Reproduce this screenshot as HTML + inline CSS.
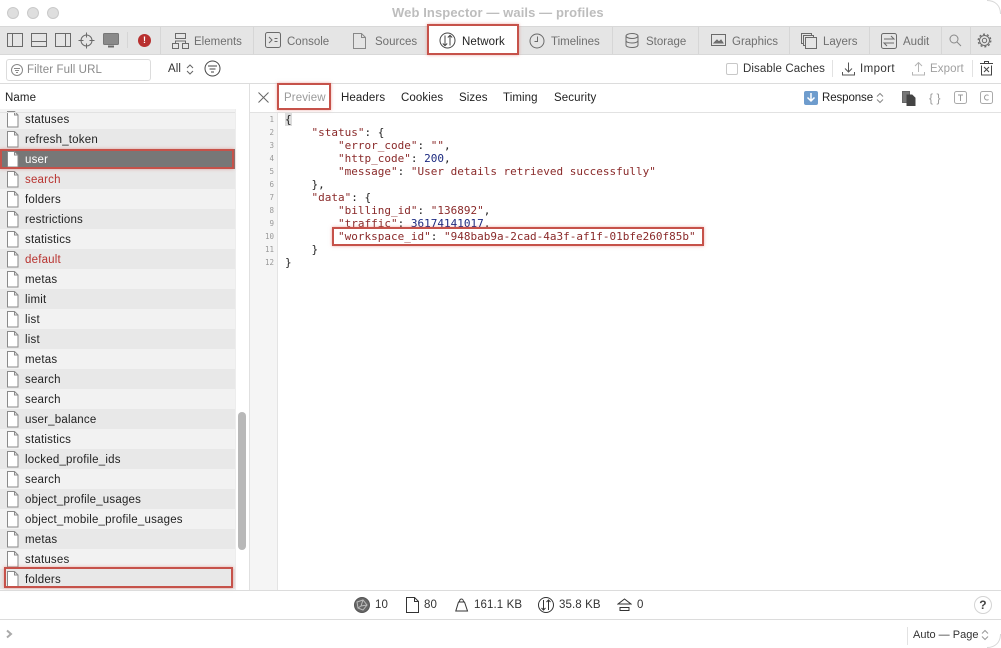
<!DOCTYPE html>
<html><head><meta charset="utf-8"><style>
html,body{margin:0;padding:0;background:#fff}
#r{position:relative;width:1001px;height:648px;overflow:hidden;background:#fff;font-family:"Liberation Sans",sans-serif;font-size:11.5px;letter-spacing:.1px;color:#222}
#r div,#r svg{position:absolute}
.t{white-space:nowrap;line-height:14px;margin-top:1px}
.g{color:#6f6f6f;letter-spacing:0}
.row{left:0;width:235px;height:20px;background:#f2f2f2}
.d{background:#e8e8e8}
.row .t{left:25px;top:3px;color:#222;letter-spacing:.2px}
.row svg{left:7px;top:0}
.c{font-family:"DejaVu Sans Mono",monospace;font-size:11px;letter-spacing:0;line-height:13px;white-space:pre;color:#222}
.k{color:#8a2a2a}.n{color:#1c2a80}
.rb{border:2px solid #c6524a;box-shadow:0 0 3px rgba(220,90,80,.5);box-sizing:border-box}
svg{fill:none;stroke:#6a6a6a;stroke-width:1}
.ln{font-family:"DejaVu Sans Mono",monospace;font-size:7.5px;letter-spacing:0;color:#999;text-align:right;width:17px;left:257px;line-height:13px}
.sep{width:1px;background:#d6d6d6}
.dot{top:7px;width:12px;height:12px;border-radius:50%;background:#dedede;border:.5px solid #cacaca;box-sizing:border-box}
</style></head><body><div id="r">
<svg width="0" height="0" style="left:0;top:0"><symbol id="f" viewBox="0 0 12 20"><path d="M.5 2.500h7l3.500 3.500v12h-10.500z" stroke="#8a8a8a" fill="#fff"/><path d="M7.500 2.500v3.500h3.500" stroke="#8a8a8a"/></symbol></svg>
<!-- title -->
<div class="dot" style="left:7px"></div>
<div class="dot" style="left:27px"></div>
<div class="dot" style="left:47px"></div>
<div class="t" style="left:392px;top:5px;font-size:13px;font-weight:bold;color:#bdbdbd">Web Inspector — wails — profiles</div>
<!-- tabbar -->
<div style="left:0;top:26px;width:1001px;height:29px;background:#e5e5e5;border-top:1px solid #d8d8d8;border-bottom:1px solid #d8d8d8;box-sizing:border-box"></div>
<div class="sep" style="left:160px;top:27px;height:27px"></div>
<div class="sep" style="left:253px;top:27px;height:27px"></div>
<div class="sep" style="left:612px;top:27px;height:27px"></div>
<div class="sep" style="left:698px;top:27px;height:27px"></div>
<div class="sep" style="left:789px;top:27px;height:27px"></div>
<div class="sep" style="left:869px;top:27px;height:27px"></div>
<div class="sep" style="left:941px;top:27px;height:27px"></div>
<div class="sep" style="left:970px;top:27px;height:27px"></div>
<svg style="left:0;top:26px" width="130" height="28"><rect x="7.500" y="7.500" width="15" height="13"/><path d="M12.500 7.500v13"/><rect x="31.500" y="7.500" width="15" height="13"/><path d="M31.500 15.500h15"/><rect x="55.500" y="7.500" width="15" height="13"/><path d="M65.500 7.500v13"/><circle cx="86.500" cy="14.500" r="5.500"/><path d="M86.500 6.500v5M86.500 17.500v5M78.500 14.500h5M89.500 14.500h5"/><rect x="103.500" y="7.500" width="15" height="11" rx="1" fill="#8a8a8a" stroke="#777"/><path d="M108 20.500h6" stroke-width="2"/></svg>
<div class="sep" style="left:127px;top:32px;height:16px"></div>
<div style="left:138px;top:34px;width:13px;height:13px;border-radius:50%;background:#b8302f;color:#fff;font-size:9px;font-weight:bold;line-height:13px;text-align:center">!</div>
<svg style="left:172px;top:33px" width="17" height="16"><rect x="3.500" y=".5" width="10" height="5"/><rect x=".5" y="10.500" width="6" height="5"/><rect x="10.500" y="10.500" width="6" height="5"/><path d="M3.500 10.500v-2.500h10v2.500"/></svg>
<div class="t g" style="left:194px;top:34px">Elements</div>
<svg style="left:265px;top:32px" width="17" height="17"><rect x=".5" y=".5" width="15" height="15" rx="2"/><path d="M4 5l3 3-3 3M9.500 6.500h3M9.500 9.500h3"/></svg>
<div class="t g" style="left:287px;top:34px">Console</div>
<svg style="left:353px;top:33px" width="13" height="16"><path d="M.5.500h8l4 4v11h-12zM8.500.500v4h4" stroke="#888"/></svg>
<div class="t g" style="left:375px;top:34px">Sources</div>
<div style="left:427px;top:24px;width:92px;height:31px;background:#fff"></div>
<svg style="left:439px;top:32px" width="18" height="18"><circle cx="8.500" cy="8.500" r="7.500" stroke="#444"/><path d="M6 3.500v10M3.800 11.500l2.200 2.200 2.200-2.200M11 13.500v-10M8.800 5.500l2.200-2.200 2.200 2.200" stroke="#444"/></svg>
<div class="t" style="left:462px;top:34px;color:#222">Network</div>
<div class="rb" style="left:427px;top:24px;width:92px;height:31px"></div>
<svg style="left:529px;top:33px" width="16" height="16"><circle cx="8" cy="8" r="7"/><path d="M8.500 3.500v5h-3"/></svg>
<div class="t g" style="left:551px;top:34px">Timelines</div>
<svg style="left:625px;top:33px" width="15" height="16"><ellipse cx="7" cy="3" rx="6" ry="2.500"/><path d="M1 3v9c0 1.500 2.500 2.500 6 2.500s6-1 6-2.500V3M1 7.500c0 1.500 2.500 2.500 6 2.500s6-1 6-2.500"/></svg>
<div class="t g" style="left:646px;top:34px">Storage</div>
<svg style="left:711px;top:34px" width="15" height="13"><rect x=".5" y=".5" width="14" height="11"/><path d="M3 9l3-3 2 2 2-2 2 3z" fill="#777"/></svg>
<div class="t g" style="left:732px;top:34px">Graphics</div>
<svg style="left:801px;top:33px" width="16" height="16"><rect x=".5" y=".5" width="10" height="10"/><rect x="2.500" y="2.500" width="10" height="10" fill="#e5e5e5"/><rect x="4.500" y="4.500" width="11" height="11" fill="#e5e5e5"/></svg>
<div class="t g" style="left:823px;top:34px">Layers</div>
<svg style="left:881px;top:33px" width="16" height="16"><rect x=".5" y=".5" width="15" height="15" rx="2"/><path d="M3 6h10l-3-3M13 10H3l3 3"/></svg>
<div class="t g" style="left:903px;top:34px">Audit</div>
<svg style="left:949px;top:34px" width="13" height="13"><circle cx="5" cy="5" r="4" stroke="#888"/><path d="M8 8l4 4" stroke="#888"/></svg>
<svg style="left:977px;top:33px" width="15" height="15"><circle cx="7.500" cy="7.500" r="2.200"/><circle cx="7.500" cy="7.500" r="5"/><circle cx="7.500" cy="7.500" r="6.300" stroke-width="1.300" stroke-dasharray="2 2"/></svg>
<!-- filter bar -->
<div style="left:6px;top:59px;width:145px;height:22px;background:#fff;border:1px solid #dcdcdc;border-radius:3px;box-sizing:border-box"></div>
<svg style="left:10px;top:63px" width="14" height="14"><circle cx="7" cy="7" r="5.500" stroke="#888"/><path d="M4 5.500h6M5 7.500h4M6 9.500h2" stroke="#888"/></svg>
<div class="t" style="left:27px;top:62px;color:#8a8a8a">Filter Full URL</div>
<div class="t" style="left:168px;top:61px;color:#333">All</div>
<svg style="left:186px;top:63px" width="8" height="13"><path d="M1 5l3-3 3 3M1 8l3 3 3-3" stroke="#666"/></svg>
<svg style="left:204px;top:60px" width="18" height="18"><circle cx="8.500" cy="8.500" r="7.500" stroke="#444"/><path d="M4 6h9M5.500 9h6M7 12h3" stroke="#444"/></svg>
<div style="left:726px;top:63px;width:12px;height:12px;border:1px solid #c8c8c8;border-radius:2px;box-sizing:border-box;background:#fff"></div>
<div class="t" style="left:743px;top:61px;color:#333">Disable Caches</div>
<div class="sep" style="left:832px;top:60px;height:17px;background:#e2e2e2"></div>
<svg style="left:842px;top:62px" width="13" height="14"><path d="M6.500.500v9M3 6.500l3.500 3.500 3.500-3.500M.5 10v3h12v-3" stroke="#555"/></svg>
<div class="t" style="left:860px;top:61px;color:#333;letter-spacing:.4px">Import</div>
<svg style="left:912px;top:62px" width="13" height="14"><path d="M6.500 10V1M3 4l3.500-3.500L10 4M.5 10v3h12v-3" stroke="#b5b5b5"/></svg>
<div class="t" style="left:930px;top:61px;color:#a0a0a0">Export</div>
<div class="sep" style="left:972px;top:60px;height:17px;background:#e2e2e2"></div>
<svg style="left:980px;top:61px" width="13" height="15"><path d="M0 2.500h13M1.500 4.500v9.500h10V4.500M4.500 2.500V.5h4v2M4 6l5 5M9 6l-5 5" stroke="#444"/></svg>
<div style="left:0;top:83px;width:1001px;height:1px;background:#dcdcdc"></div>
<!-- name header -->
<div class="t" style="left:5px;top:90px;color:#222">Name</div>
<div style="left:0;top:112px;width:1001px;height:1px;background:#e2e2e2"></div>
<div style="left:249px;top:84px;width:1px;height:506px;background:#e0e0e0"></div>
<svg style="left:258px;top:92px" width="11" height="11"><path d="M.5.500l10 10M10.500.500l-10 10" stroke="#666"/></svg>
<div class="t" style="left:284px;top:90px;color:#9a9a9a">Preview</div>
<div class="rb" style="left:277px;top:83px;width:54px;height:27px"></div>
<div class="t" style="left:341px;top:90px">Headers</div>
<div class="t" style="left:401px;top:90px">Cookies</div>
<div class="t" style="left:459px;top:90px">Sizes</div>
<div class="t" style="left:503px;top:90px">Timing</div>
<div class="t" style="left:554px;top:90px">Security</div>
<div style="left:804px;top:91px;width:14px;height:14px;background:#6e9ccd;border-radius:2px"></div>
<svg style="left:806px;top:92px" width="10" height="11"><path d="M5 1v8M1.500 5.500L5 9l3.500-3.500" stroke="#fff" stroke-width="1.500"/></svg>
<div class="t" style="left:822px;top:90px;color:#222;letter-spacing:-.1px">Response</div>
<svg style="left:876px;top:92px" width="8" height="12"><path d="M1 4.500l3-3 3 3M1 7.500l3 3 3-3" stroke="#888"/></svg>
<svg style="left:902px;top:91px" width="14" height="15"><path d="M.5.500h7v11h-7z" fill="#777" stroke="#666"/><path d="M5 4h5l3 3v7.500H5z" fill="#444" stroke="#444"/></svg>
<div class="t" style="left:929px;top:90px;color:#999;font-size:12px">{&nbsp;}</div>
<svg style="left:954px;top:91px" width="14" height="14"><rect x=".5" y=".5" width="12" height="12" rx="2" stroke="#aaa"/><path d="M4 4h5M6.500 4v6" stroke="#999"/></svg>
<svg style="left:980px;top:91px" width="14" height="14"><rect x=".5" y=".5" width="12" height="12" rx="2" stroke="#aaa"/><path d="M8.500 4.500a2.500 2.500 0 1 0 0 4" stroke="#999"/></svg>
<!-- list -->
<div style="left:0;top:109px;width:249px;height:481px;background:#f6f6f6;overflow:hidden">
<div class="row" style="top:0"><svg width="12" height="20"><use href="#f"/></svg><div class="t">statuses</div></div>
<div class="row d" style="top:20px"><svg width="12" height="20"><use href="#f"/></svg><div class="t">refresh_token</div></div>
<div class="row" style="top:40px;background:#777"><svg width="12" height="20"><use href="#f"/></svg><div class="t" style="color:#fff">user</div></div>
<div class="row d" style="top:60px"><svg width="12" height="20"><use href="#f"/></svg><div class="t" style="color:#b8322f">search</div></div>
<div class="row" style="top:80px"><svg width="12" height="20"><use href="#f"/></svg><div class="t">folders</div></div>
<div class="row d" style="top:100px"><svg width="12" height="20"><use href="#f"/></svg><div class="t">restrictions</div></div>
<div class="row" style="top:120px"><svg width="12" height="20"><use href="#f"/></svg><div class="t">statistics</div></div>
<div class="row d" style="top:140px"><svg width="12" height="20"><use href="#f"/></svg><div class="t" style="color:#b8322f">default</div></div>
<div class="row" style="top:160px"><svg width="12" height="20"><use href="#f"/></svg><div class="t">metas</div></div>
<div class="row d" style="top:180px"><svg width="12" height="20"><use href="#f"/></svg><div class="t">limit</div></div>
<div class="row" style="top:200px"><svg width="12" height="20"><use href="#f"/></svg><div class="t">list</div></div>
<div class="row d" style="top:220px"><svg width="12" height="20"><use href="#f"/></svg><div class="t">list</div></div>
<div class="row" style="top:240px"><svg width="12" height="20"><use href="#f"/></svg><div class="t">metas</div></div>
<div class="row d" style="top:260px"><svg width="12" height="20"><use href="#f"/></svg><div class="t">search</div></div>
<div class="row" style="top:280px"><svg width="12" height="20"><use href="#f"/></svg><div class="t">search</div></div>
<div class="row d" style="top:300px"><svg width="12" height="20"><use href="#f"/></svg><div class="t">user_balance</div></div>
<div class="row" style="top:320px"><svg width="12" height="20"><use href="#f"/></svg><div class="t">statistics</div></div>
<div class="row d" style="top:340px"><svg width="12" height="20"><use href="#f"/></svg><div class="t">locked_profile_ids</div></div>
<div class="row" style="top:360px"><svg width="12" height="20"><use href="#f"/></svg><div class="t">search</div></div>
<div class="row d" style="top:380px"><svg width="12" height="20"><use href="#f"/></svg><div class="t">object_profile_usages</div></div>
<div class="row" style="top:400px"><svg width="12" height="20"><use href="#f"/></svg><div class="t">object_mobile_profile_usages</div></div>
<div class="row d" style="top:420px"><svg width="12" height="20"><use href="#f"/></svg><div class="t">metas</div></div>
<div class="row" style="top:440px"><svg width="12" height="20"><use href="#f"/></svg><div class="t">statuses</div></div>
<div class="row d" style="top:460px"><svg width="12" height="20"><use href="#f"/></svg><div class="t">folders</div></div>
</div>
<div style="left:0;top:112px;width:249px;height:1px;background:#e2e2e2"></div>
<div style="left:235px;top:109px;width:14px;height:481px;background:#fff;border-left:1px solid #ededed;box-sizing:border-box"></div>
<div style="left:238px;top:412px;width:8px;height:138px;border-radius:4px;background:#b8b8b8"></div>
<div class="rb" style="left:0;top:149px;width:234px;height:20px"></div>
<div class="rb" style="left:4px;top:567px;width:229px;height:21px"></div>
<!-- code -->
<div style="left:250px;top:113px;width:28px;height:477px;background:#f5f5f5;border-right:1px solid #e4e4e4;box-sizing:border-box"></div>
<div class="ln" style="top:113px">1<br>2<br>3<br>4<br>5<br>6<br>7<br>8<br>9<br>10<br>11<br>12</div>
<div style="left:285px;top:113px;width:7px;height:13px;background:#dcdcdc"></div>
<div class="c" style="left:285px;top:113px">{
    <span class="k">"status"</span>: {
        <span class="k">"error_code"</span>: <span class="k">""</span>,
        <span class="k">"http_code"</span>: <span class="n">200</span>,
        <span class="k">"message"</span>: <span class="k">"User details retrieved successfully"</span>
    },
    <span class="k">"data"</span>: {
        <span class="k">"billing_id"</span>: <span class="k">"136892"</span>,
        <span class="k">"traffic"</span>: <span class="n">36174141017</span>,
        <span class="k">"workspace_id"</span>: <span class="k">"948bab9a-2cad-4a3f-af1f-01bfe260f85b"</span>
    }
}</div>
<div style="left:332px;top:227px;width:372px;height:19px;border:2px solid #c6524a;box-shadow:0 0 3px rgba(220,90,80,.5);box-sizing:border-box;background:#fff"></div>
<div class="c" style="left:338px;top:230px"><span class="k">"workspace_id"</span>: <span class="k">"948bab9a-2cad-4a3f-af1f-01bfe260f85b"</span></div>
<!-- status bar -->
<div style="left:0;top:590px;width:1001px;height:1px;background:#dcdcdc"></div>
<div style="left:0;top:619px;width:1001px;height:1px;background:#dcdcdc"></div>
<svg style="left:354px;top:597px" width="16" height="16"><circle cx="8" cy="8" r="7.500" fill="#666" stroke="#555"/><path d="M3 5l6-2 4 5-4 5-5-2zM9 3l-2 6 6-1M7 9l-3 2" stroke="#bbb"/></svg>
<div class="t" style="left:375px;top:597px;color:#333">10</div>
<svg style="left:406px;top:597px" width="13" height="16"><path d="M.5.500h8l4 4v11h-12zM8.500.500v4h4" stroke="#333"/></svg>
<div class="t" style="left:424px;top:597px;color:#333">80</div>
<svg style="left:455px;top:598px" width="14" height="14"><path d="M3 13H.8L3.500 4h6L12.500 13zM4.500 4c0-4 4-4 4 0" stroke="#333"/></svg>
<div class="t" style="left:474px;top:597px;color:#333">161.1 KB</div>
<svg style="left:538px;top:597px" width="17" height="17"><circle cx="8" cy="8" r="7.500" stroke="#333"/><path d="M5.500 3v10M3.500 11l2 2 2-2M10.500 13V3M8.500 5l2-2 2 2" stroke="#333"/></svg>
<div class="t" style="left:559px;top:597px;color:#333">35.8 KB</div>
<svg style="left:617px;top:598px" width="15" height="14"><path d="M1 6l6.500-5L14 6zM3 9.500h9v3H3z" stroke="#333"/></svg>
<div class="t" style="left:637px;top:597px;color:#333">0</div>
<div style="left:974px;top:596px;width:18px;height:18px;border-radius:50%;background:#fff;border:1px solid #d4d4d4;box-sizing:border-box;text-align:center;font-size:12px;font-weight:bold;line-height:17px;color:#444">?</div>
<!-- console -->
<svg style="left:5px;top:629px" width="9" height="11"><path d="M2 1.500l4 3.500-4 3.500" stroke="#aaa" stroke-width="2"/></svg>
<div class="sep" style="left:907px;top:627px;height:18px;background:#e2e2e2"></div>
<div class="t" style="left:913px;top:627px;color:#333;font-size:11px;letter-spacing:0">Auto — Page</div>
<svg style="left:981px;top:629px" width="8" height="12"><path d="M1 4.500l3-3 3 3M1 7.500l3 3 3-3" stroke="#999"/></svg>
<!-- window corners -->
<svg style="left:987px;top:0" width="14" height="14"><path d="M0 .5c8 0 13.500 5 13.500 13.500" stroke="#d8d8d8"/></svg>
<svg style="left:987px;top:634px" width="14" height="14"><path d="M0 13.500c8 0 13.500-5 13.500-13.500" stroke="#d8d8d8"/></svg>
</div></body></html>
